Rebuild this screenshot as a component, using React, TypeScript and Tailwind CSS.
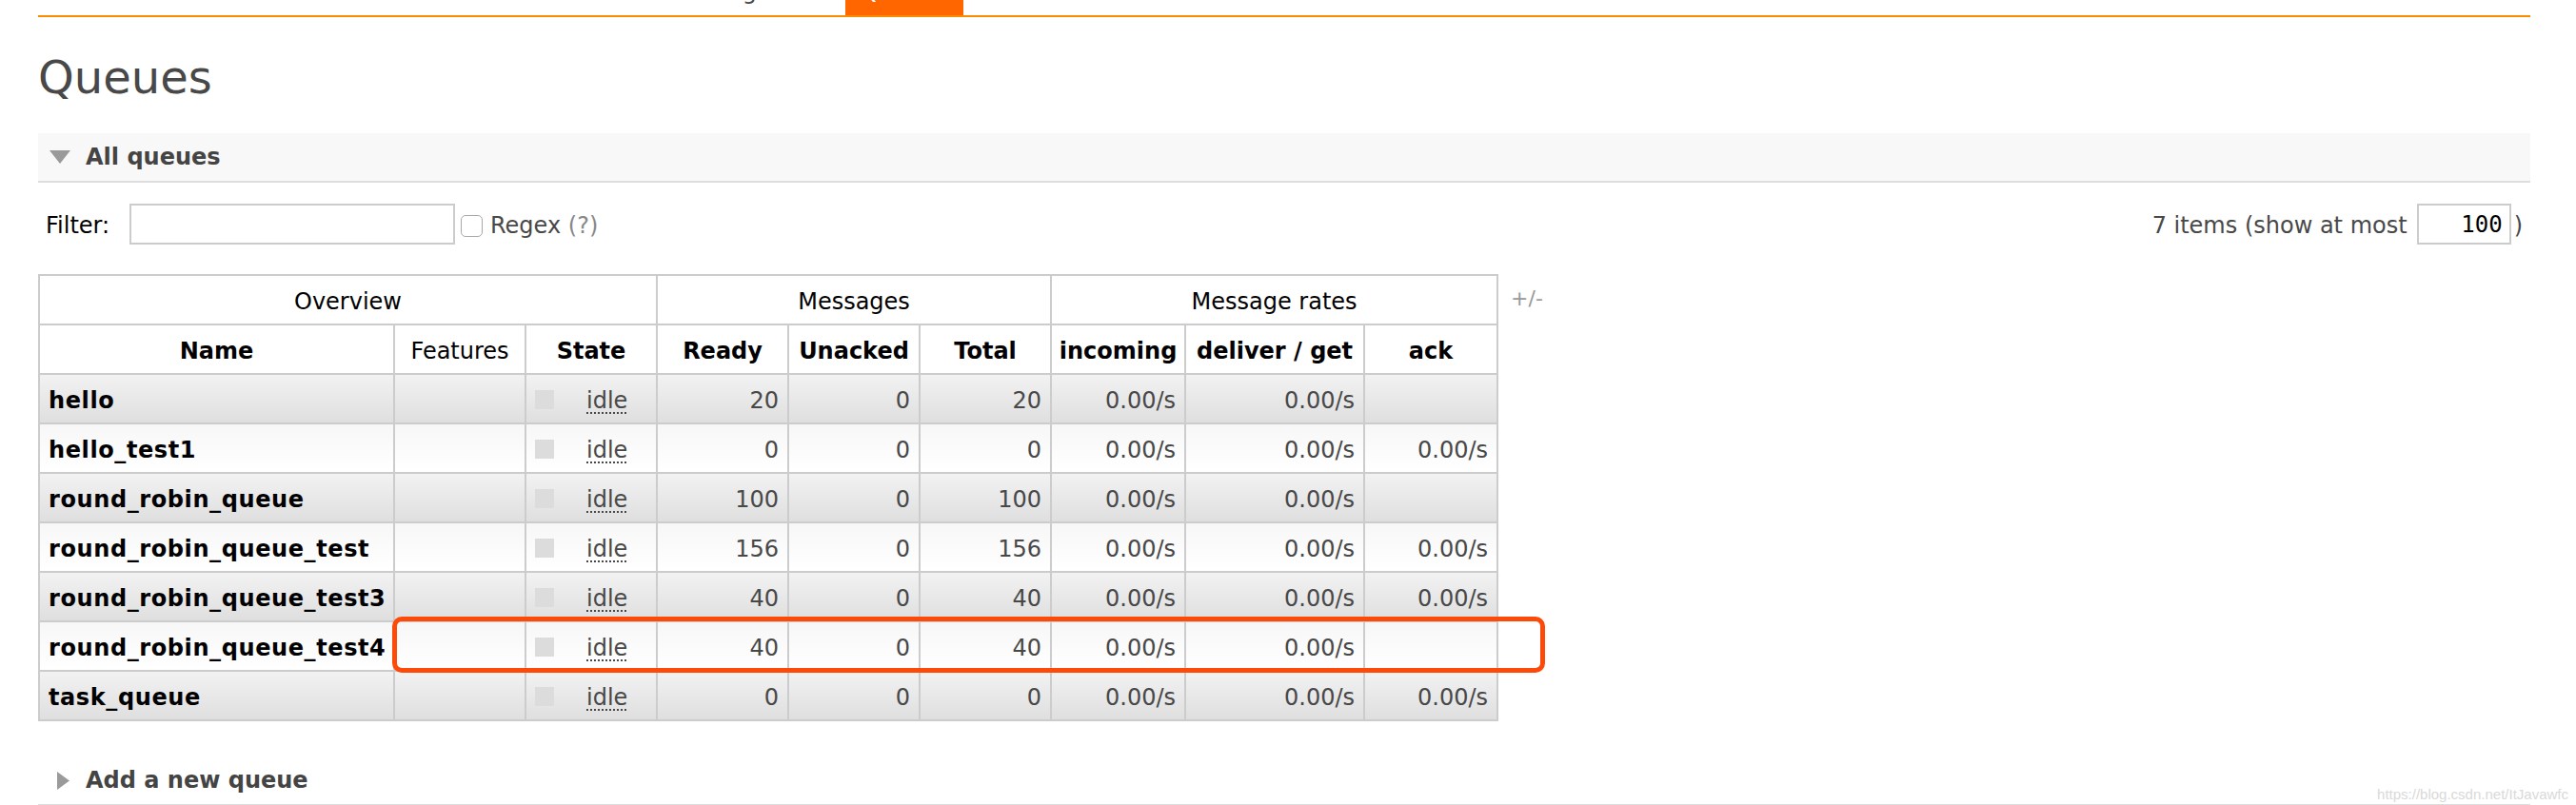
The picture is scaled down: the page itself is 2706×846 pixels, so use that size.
import type { ReactNode } from 'react'

type Queue = {
  name: string
  ready: number
  unacked: number
  total: number
  incoming: string
  deliver: string
  ack: string
}

const QUEUES: Queue[] = [
  { name: 'hello', ready: 20, unacked: 0, total: 20, incoming: '0.00/s', deliver: '0.00/s', ack: '' },
  { name: 'hello_test1', ready: 0, unacked: 0, total: 0, incoming: '0.00/s', deliver: '0.00/s', ack: '0.00/s' },
  { name: 'round_robin_queue', ready: 100, unacked: 0, total: 100, incoming: '0.00/s', deliver: '0.00/s', ack: '' },
  { name: 'round_robin_queue_test', ready: 156, unacked: 0, total: 156, incoming: '0.00/s', deliver: '0.00/s', ack: '0.00/s' },
  { name: 'round_robin_queue_test3', ready: 40, unacked: 0, total: 40, incoming: '0.00/s', deliver: '0.00/s', ack: '0.00/s' },
  { name: 'round_robin_queue_test4', ready: 40, unacked: 0, total: 40, incoming: '0.00/s', deliver: '0.00/s', ack: '' },
  { name: 'task_queue', ready: 0, unacked: 0, total: 0, incoming: '0.00/s', deliver: '0.00/s', ack: '0.00/s' },
]

const NAV = ['Overview', 'Connections', 'Channels', 'Exchanges', 'Queues', 'Admin']

const th = 'h-[52px] border-2 border-[#ccc] bg-white px-[6px] pt-[4px] text-center align-middle text-black'
const td = 'h-[52px] border-2 border-[#ccc] px-[9px] pt-[4px] align-middle'

function Cell({ alt, className = '', children }: { alt: boolean; className?: string; children?: ReactNode }) {
  const bg = alt
    ? 'bg-linear-to-b from-[#f2f2f2] to-[#dfdfdf]'
    : 'bg-linear-to-b from-[#f7f7f7] to-white'
  return <td className={`${td} ${bg} ${className}`}>{children}</td>
}

function SectionTitle({ open, children }: { open: boolean; children: ReactNode }) {
  return (
    <div
      className={`flex h-[52px] items-center border-b-2 border-[#ddd] ${open ? 'bg-[#f8f8f8] pl-[12px]' : 'bg-white pl-[20px]'}`}
    >
      {open ? (
        <svg width="22" height="14" viewBox="0 0 22 14" className="mr-[16px]">
          <polygon points="0,0 22,0 11,14" fill="#9a9a9a" />
        </svg>
      ) : (
        <svg width="13" height="19" viewBox="0 0 13 19" className="mr-[17px]">
          <polygon points="0,0 13,9.5 0,19" fill="#9a9a9a" />
        </svg>
      )}
      <span className="text-[24px] leading-[24px] font-bold text-[#444]">{children}</span>
    </div>
  )
}

export default function App() {
  return (
    <div className="relative h-[846px] w-[2706px] overflow-hidden bg-white font-['DejaVu_Sans',Verdana,sans-serif] text-[24px] text-[#484848]">
      <div className="pl-[40px] pr-[48px]">
        {/* menu, only the bottom edge shows */}
        <div className="h-[18px] overflow-hidden border-b-2 border-[#fb8c00]">
          <div className="-mt-[21px] ml-[18px] flex gap-[50px] leading-[24px]">
            {NAV.map((item) => (
              <span
                key={item}
                className={`px-[16px] pb-[14px] ${item === 'Queues' ? 'bg-[#ff6600] text-white' : 'text-[#484848]'}`}
              >
                {item}
              </span>
            ))}
          </div>
        </div>

        <h1 className="mt-[39px] text-[48px] leading-[48px] font-normal text-[#484848]">Queues</h1>

        <div className="mt-[35px]">
          <SectionTitle open>All queues</SectionTitle>
        </div>

        {/* filter row */}
        <div className="mt-[22px] flex h-[43px] items-center leading-[24px]">
          <span className="ml-[8px] w-[88px] pt-[2px] text-black">Filter:</span>
          <span className="h-[43px] w-[342px] border-2 border-[#ccc] bg-white" />
          <span className="mt-[4px] ml-[6px] h-[23px] w-[23px] rounded-[5px] border-[1.5px] border-[#a8a8a8] bg-white" />
          <span className="ml-[8px] pt-[2px]">
            Regex <span className="text-[#888]">(?)</span>
          </span>
          <span className="ml-auto pt-[2px]">7 items (show at most</span>
          <span className="ml-[10px] flex h-[43px] w-[99px] items-center justify-end border-2 border-[#ccc] bg-white pr-[7px] font-['DejaVu_Sans_Mono',monospace] text-black">
            100
          </span>
          <span className="mr-[8px] ml-[3px] pt-[2px]">)</span>
        </div>

        {/* queue table */}
        <div className="mt-[31px] flex items-start">
          <table className="w-[1532px] table-fixed border-collapse border-2 border-[#ccc] leading-[24px]">
            <colgroup>
              <col className="w-[373px]" />
              <col className="w-[138px]" />
              <col className="w-[138px]" />
              <col className="w-[138px]" />
              <col className="w-[138px]" />
              <col className="w-[138px]" />
              <col className="w-[141px]" />
              <col className="w-[188px]" />
              <col className="w-[140px]" />
            </colgroup>
            <thead>
              <tr>
                <th colSpan={3} className={`${th} font-normal`}>Overview</th>
                <th colSpan={3} className={`${th} font-normal`}>Messages</th>
                <th colSpan={3} className={`${th} font-normal`}>Message rates</th>
              </tr>
              <tr>
                <th className={`${th} font-bold`}>Name</th>
                <th className={`${th} font-normal`}>Features</th>
                <th className={`${th} font-bold`}>State</th>
                <th className={`${th} font-bold`}>Ready</th>
                <th className={`${th} font-bold`}>Unacked</th>
                <th className={`${th} font-bold`}>Total</th>
                <th className={`${th} px-0 font-bold`}>incoming</th>
                <th className={`${th} px-0 font-bold`}>deliver / get</th>
                <th className={`${th} font-bold`}>ack</th>
              </tr>
            </thead>
            <tbody>
              {QUEUES.map((q, i) => {
                const alt = i % 2 === 0
                return (
                  <tr key={q.name}>
                    <Cell alt={alt} className="font-bold tracking-[0.6px] whitespace-nowrap text-black">
                      {q.name}
                    </Cell>
                    <Cell alt={alt} />
                    <Cell alt={alt}>
                      <div className="flex items-center">
                        <span className="-mt-[3px] h-[20px] w-[20px] bg-[#dcdcdc]" />
                        <span className="ml-[34px] underline decoration-dotted decoration-[2px] underline-offset-[4px]">
                          idle
                        </span>
                      </div>
                    </Cell>
                    <Cell alt={alt} className="text-right">{q.ready}</Cell>
                    <Cell alt={alt} className="text-right">{q.unacked}</Cell>
                    <Cell alt={alt} className="text-right">{q.total}</Cell>
                    <Cell alt={alt} className="text-right">{q.incoming}</Cell>
                    <Cell alt={alt} className="text-right">{q.deliver}</Cell>
                    <Cell alt={alt} className="text-right">{q.ack}</Cell>
                  </tr>
                )
              })}
            </tbody>
          </table>
          <span className="mt-[14px] ml-[13px] text-[22px] leading-[24px] text-[#999]">+/-</span>
        </div>

        <div className="mt-[37px]">
          <SectionTitle open={false}>Add a new queue</SectionTitle>
        </div>
      </div>

      {/* highlight drawn over the test4 row */}
      <div className="absolute top-[648px] left-[412px] h-[59px] w-[1211px] rounded-[10px] border-[5px] border-[#fe4a08]" />

      <span className="absolute right-[8px] bottom-[3px] font-['Liberation_Sans',Arial,sans-serif] text-[15px] leading-[16px] text-[#d9d9d9]">
        https://blog.csdn.net/ItJavawfc
      </span>
    </div>
  )
}
